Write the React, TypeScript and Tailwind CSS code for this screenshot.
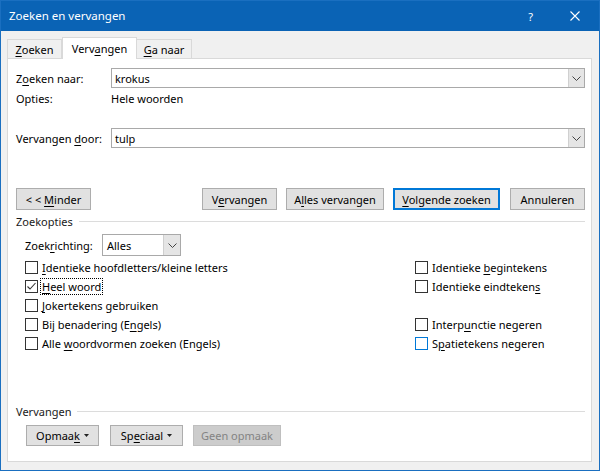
import React from "react";

const Chevron = () => (
  <svg width="9" height="5" viewBox="0 0 9 5">
    <path d="M0.5 0.5 L4.5 4.5 L8.5 0.5" fill="none" stroke="#444" strokeWidth="1" />
  </svg>
);

const Tri = () => (
  <svg width="5" height="3" viewBox="0 0 5 3" className="ml-[4px]">
    <path d="M0 0 H5 L2.5 3 Z" fill="#222" />
  </svg>
);

const Combo = ({ value }: { value: string }) => (
  <div className="flex-1 h-[20px] flex border border-[#a9a9a9] bg-white">
    <div className="flex-1 flex items-center pl-[3px]">{value}</div>
    <div className="w-[16px] h-full bg-[#e5e5e5] flex items-center justify-center border-l border-[#d0d0d0]">
      <Chevron />
    </div>
  </div>
);

const Btn = ({ children, cls }: { children: React.ReactNode; cls: string }) => (
  <div className={"flex items-center justify-center border border-[#adadad] bg-[#e1e1e1] " + cls}>{children}</div>
);

const Box = ({ checked, blue }: { checked?: boolean; blue?: boolean }) => (
  <div
    className={
      "w-[13px] h-[13px] bg-white border flex items-center justify-center shrink-0 " +
      (blue ? "border-[#0078d7]" : "border-[#333333]")
    }
  >
    {checked && (
      <svg width="11" height="11" viewBox="0 0 11 11">
        <path d="M1.5 5.5 L4 8 L9.5 2" fill="none" stroke="#333" strokeWidth="1.1" />
      </svg>
    )}
  </div>
);

const Check = ({ children, checked, blue, focus }: { children: React.ReactNode; checked?: boolean; blue?: boolean; focus?: boolean }) => (
  <div className="h-[19px] flex items-center">
    <Box checked={checked} blue={blue} />
    <div
      className={
        "ml-[3px] h-[15px] flex items-center px-[1px] whitespace-nowrap " +
        (focus ? "outline outline-1 outline-dotted outline-[#000000]" : "")
      }
    >
      <span>{children}</span>
    </div>
  </div>
);

const U = ({ children }: { children: React.ReactNode }) => (
  <span className="underline underline-offset-[2px] decoration-[1px]">{children}</span>
);

export default function App() {
  return (
    <div className="w-[600px] h-[471px] border border-[#1a6fc0] bg-[#f0f0f0] flex flex-col font-['Noto_Sans',sans-serif] text-[11px] text-black leading-none overflow-hidden">
      {/* Title bar */}
      <div className="h-[30px] bg-[#0a63b5] flex items-center text-white shrink-0">
        <div className="ml-[8px] text-[11.5px]">Zoeken en vervangen</div>
        <div className="flex-1" />
        <div className="text-[11px] mr-[37px]">?</div>
        <svg width="10" height="10" viewBox="0 0 10 10" className="mr-[19px]">
          <path d="M0.5 0.5 L9.5 9.5 M9.5 0.5 L0.5 9.5" stroke="white" strokeWidth="1.1" />
        </svg>
      </div>

      {/* Body */}
      <div className="flex-1 flex flex-col pt-[6px] pl-[6px]">
        {/* Tabs */}
        <div className="h-[21px] flex items-end relative z-10">
          <div className="h-[19px] w-[55px] border border-b-0 border-[#d9d9d9] bg-[#f0f0f0] flex items-center justify-center">
            <span><U>Z</U>oeken</span>
          </div>
          <div className="h-[22px] w-[75px] mb-[-1px] border border-b-0 border-[#d9d9d9] bg-white flex items-center justify-center">
            <span>Verv<U>a</U>ngen</span>
          </div>
          <div className="h-[19px] w-[55px] border border-b-0 border-l-0 border-[#d9d9d9] bg-[#f0f0f0] flex items-center justify-center">
            <span><U>G</U>a naar</span>
          </div>
        </div>

        {/* Panel */}
        <div className="w-[585px] h-[404px] bg-white border border-[#d9d9d9] flex flex-col pl-[8px] pr-[6px]">
          <div className="mt-[9px] h-[20px] flex items-center">
            <div className="w-[95px]"><span>Z<U>o</U>eken naar:</span></div>
            <Combo value="krokus" />
          </div>
          <div className="h-[20px] flex items-center">
            <div className="w-[95px]">Opties:</div>
            <div>Hele woorden</div>
          </div>
          <div className="mt-[20px] h-[20px] flex items-center">
            <div className="w-[95px]"><span>Vervangen <U>d</U>oor:</span></div>
            <Combo value="tulp" />
          </div>

          <div className="mt-[40px] h-[22px] flex">
            <Btn cls="w-[75px] h-[22px]">
              <span>&lt; &lt; <U>M</U>inder</span>
            </Btn>
            <div className="flex-1" />
            <Btn cls="w-[75px] h-[22px]">
              <span>V<U>e</U>rvangen</span>
            </Btn>
            <Btn cls="w-[98px] h-[22px] ml-[9px]">
              <span>A<U>l</U>les vervangen</span>
            </Btn>
            <div className="w-[107px] h-[22px] ml-[9px] flex items-center justify-center border-2 border-[#0078d7] bg-[#e1e1e1]">
              <span><U>V</U>olgende zoeken</span>
            </div>
            <Btn cls="w-[75px] h-[22px] ml-[10px]">
              <span>Annuleren</span>
            </Btn>
          </div>

          <div className="mt-[4px] h-[14px] flex items-center">
            <div className="text-[#1a1a1a]">Zoekopties</div>
            <div className="flex-1 ml-[6px] h-px bg-[#dcdcdc]" />
          </div>

          <div className="mt-[6px] h-[22px] flex items-center pl-[9px]">
            <div className="w-[77px]"><span>Zoek<U>r</U>ichting:</span></div>
            <div className="w-[79px] h-[22px] flex border border-[#a9a9a9] bg-white">
              <div className="flex-1 flex items-center pl-[4px]">Alles</div>
              <div className="w-[17px] h-full bg-[#e5e5e5] border-l border-[#cfcfcf] flex items-center justify-center">
                <Chevron />
              </div>
            </div>
          </div>

          <div className="mt-[2px] flex pl-[9px]">
            <div className="w-[390px] flex flex-col">
              <Check><U>I</U>dentieke hoofdletters/kleine letters</Check>
              <Check checked focus><U>H</U>eel woord</Check>
              <Check><U>J</U>okertekens gebruiken</Check>
              <Check>Bij benadering (E<U>n</U>gels)</Check>
              <Check>Alle <U>w</U>oordvormen zoeken (Engels)</Check>
            </div>
            <div className="flex flex-col">
              <Check>Identieke <U>b</U>egintekens</Check>
              <Check>Identieke eindteken<U>s</U></Check>
              <div className="h-[19px]" />
              <Check>Interp<U>u</U>nctie negeren</Check>
              <Check blue>S<U>p</U>atietekens negeren</Check>
            </div>
          </div>

          <div className="mt-[51px] h-[14px] flex items-center">
            <div className="text-[#1a1a1a]">Vervangen</div>
            <div className="flex-1 ml-[6px] h-px bg-[#dcdcdc]" />
          </div>

          <div className="mt-[7px] h-[21px] flex pl-[10px]">
            <Btn cls="w-[73px] h-[21px]">
              <span>Opmaa<U>k</U></span>
              <Tri />
            </Btn>
            <Btn cls="w-[73px] h-[21px] ml-[11px]">
              <span>Sp<U>e</U>ciaal</span>
              <Tri />
            </Btn>
            <div className="w-[88px] h-[21px] ml-[10px] flex items-center justify-center border border-[#bfbfbf] bg-[#cccccc] text-[#838383]">
              Geen opmaak
            </div>
          </div>
        </div>
      </div>
    </div>
  );
}
